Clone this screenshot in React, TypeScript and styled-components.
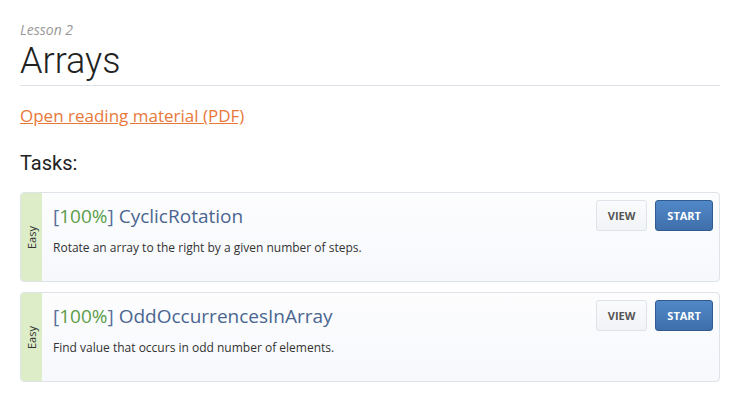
import styled, { createGlobalStyle } from "styled-components";

const GlobalStyle = createGlobalStyle`
  body {
    margin: 0;
    background: #fff;
    font-family: "Open Sans", "Liberation Sans", sans-serif;
  }
`;

const tasks = [
  {
    name: "CyclicRotation",
    desc: "Rotate an array to the right by a given number of steps.",
  },
  {
    name: "OddOccurrencesInArray",
    desc: "Find value that occurs in odd number of elements.",
  },
];

export default function App() {
  return (
    <>
      <GlobalStyle />
      <Page>
        <Lesson>Lesson 2</Lesson>
        <Title>Arrays</Title>
        <Divider />
        <PdfLink href="#">Open reading material (PDF)</PdfLink>
        <TasksHeading>Tasks:</TasksHeading>
        <TaskList>
          {tasks.map((t) => (
            <Card key={t.name}>
              <Level>
                <span>Easy</span>
              </Level>
              <Body>
                <TaskTitle>
                  <Bracket>[</Bracket>
                  <Score>100%</Score>
                  <Bracket>]</Bracket> {t.name}
                </TaskTitle>
                <Desc>{t.desc}</Desc>
              </Body>
              <Actions>
                <Button>VIEW</Button>
                <Button $primary>START</Button>
              </Actions>
            </Card>
          ))}
        </TaskList>
      </Page>
    </>
  );
}

const Page = styled.div`
  padding: 20px 27px 0 20px;
`;

const Lesson = styled.div`
  font-style: italic;
  font-size: 14px;
  line-height: 19px;
  color: #999;
`;

const Title = styled.h1`
  margin: 0;
  font-family: Roboto, "Liberation Sans", sans-serif;
  font-weight: 300;
  font-size: 36px;
  line-height: 44px;
  color: #222;
`;

const Divider = styled.div`
  height: 1px;
  background: #dde3e8;
  margin-top: 2px;
`;

const PdfLink = styled.a`
  display: inline-block;
  margin-top: 19px;
  font-size: 17px;
  line-height: 22px;
  color: #e8783a;
  text-decoration: underline;
`;

const TasksHeading = styled.h3`
  margin: 24px 0 0;
  font-family: Roboto, "Liberation Sans", sans-serif;
  font-weight: 400;
  font-size: 20px;
  line-height: 24px;
  color: #222;
`;

const TaskList = styled.div`
  display: flex;
  flex-direction: column;
  gap: 10px;
  margin-top: 17px;
`;

const Card = styled.div`
  display: flex;
  height: 88px;
  border: 1px solid #dde3e8;
  border-radius: 4px;
  overflow: hidden;
  background: linear-gradient(to bottom, #fdfdfe, #f6f8fc);
`;

const Level = styled.div`
  width: 21px;
  flex-shrink: 0;
  background: #dcedc8;
  display: flex;
  align-items: center;
  justify-content: center;

  span {
    transform: rotate(-90deg);
    font-size: 11px;
    color: #333;
    white-space: nowrap;
  }
`;

const Body = styled.div`
  flex: 1;
  padding: 10px 0 0 11px;
`;

const TaskTitle = styled.div`
  font-size: 19px;
  line-height: 27px;
  color: #4a6690;
`;

const Bracket = styled.span`
  color: #56709a;
`;

const Score = styled.span`
  color: #5c9e4a;
`;

const Desc = styled.div`
  margin-top: 10px;
  font-size: 12px;
  line-height: 16px;
  color: #333;
`;

const Actions = styled.div`
  display: flex;
  gap: 8px;
  padding: 7px 6px 0 0;
  align-items: flex-start;
`;

const Button = styled.button<{ $primary?: boolean }>`
  height: 31px;
  padding: 0 11px;
  border-radius: 3px;
  font-family: "Open Sans", "Liberation Sans", sans-serif;
  font-weight: 700;
  font-size: 11px;
  cursor: pointer;
  border: 1px solid ${(p) => (p.$primary ? "#2f5b8f" : "#dde3e8")};
  color: ${(p) => (p.$primary ? "#fff" : "#555")};
  background: ${(p) =>
    p.$primary
      ? "linear-gradient(to bottom, #5188c8, #3f6fab)"
      : "linear-gradient(to bottom, #fafbfc, #f1f3f6)"};
`;
